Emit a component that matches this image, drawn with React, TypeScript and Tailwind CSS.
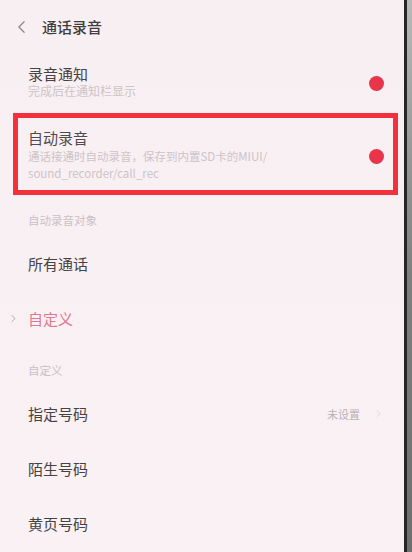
import React from 'react'

const font = { fontFamily: '"Noto Sans CJK SC", "Noto Sans", sans-serif' }

function Chevron({ className, dir = 'right' }: { className?: string; dir?: 'left' | 'right' }) {
  return (
    <svg viewBox="0 0 10 16" className={className} fill="none" stroke="currentColor" strokeWidth="1.4" strokeLinecap="round" strokeLinejoin="round">
      {dir === 'left' ? <path d="M8 2 L2 8 L8 14" /> : <path d="M2 2 L8 8 L2 14" />}
    </svg>
  )
}

function Dot() {
  return <div className="w-[15px] h-[15px] rounded-full bg-[#e8354b] flex-shrink-0" />
}

function Row({ label }: { label: string }) {
  return (
    <div className="h-[55px] px-[28px] flex items-center">
      <span className="text-[15px] leading-[20px] text-[#454243]">{label}</span>
    </div>
  )
}

function SectionHeader({ label }: { label: string }) {
  return (
    <div className="h-[41px] pt-[17px] px-[28px]">
      <p className="text-[11.5px] leading-[16px] text-[#c9c0c4]">{label}</p>
    </div>
  )
}

export default function App() {
  return (
    <div className="w-[412px] h-[552px] flex overflow-hidden" style={font}>
      <div className="flex-1 bg-gradient-to-b from-[#f8eff2] via-[#f9f0f4] to-[#f9f1f3]">
        {/* header */}
        <div className="h-[54px] flex items-center pl-[17px]">
          <Chevron dir="left" className="w-[9px] h-[14px] text-[#8c8689]" />
          <span className="ml-[16px] text-[15px] leading-[20px] font-medium text-[#3f3d3e]">通话录音</span>
        </div>

        {/* 录音通知 */}
        <div className="h-[59px] pl-[28px] pr-[20px] flex items-start justify-between">
          <div className="pt-[10px]">
            <p className="text-[15px] leading-[20px] text-[#454243]">录音通知</p>
            <p className="text-[12px] leading-[14px] text-[#cdc4c8]">完成后在通知栏显示</p>
          </div>
          <div className="pt-[22px]">
            <Dot />
          </div>
        </div>

        {/* 自动录音 (highlighted) */}
        <div className="h-[82px] ml-[13px] mr-[6px] border-[5px] border-[#f2313d] pl-[10px] pr-[9px] flex items-center justify-between">
          <div className="pt-[1px]">
            <p className="text-[15px] leading-[20px] text-[#504c4e]">自动录音</p>
            <p className="text-[11.5px] leading-[17px] text-[#cdc4c8]">通话接通时自动录音，保存到内置SD卡的MIUI/</p>
            <p className="text-[11.5px] leading-[17px] text-[#cdc4c8]">sound_recorder/call_rec</p>
          </div>
          <div className="pt-[4px]">
            <Dot />
          </div>
        </div>

        <SectionHeader label="自动录音对象" />
        <Row label="所有通话" />
        <div className="h-[55px] pl-[11px] flex items-center">
          <Chevron className="w-[5px] h-[9px] text-[#8e878a]" />
          <span className="ml-[12px] text-[15px] leading-[20px] text-[#e2788c]">自定义</span>
        </div>

        <div className="h-[40px] pt-[16px] px-[28px]">
          <p className="text-[11.5px] leading-[16px] text-[#c9c0c4]">自定义</p>
        </div>
        <div className="h-[55px] pl-[28px] pr-[23px] flex items-center justify-between">
          <span className="text-[15px] leading-[20px] text-[#454243]">指定号码</span>
          <div className="flex items-center">
            <span className="text-[11px] leading-[16px] text-[#b9b1b5]">未设置</span>
            <Chevron className="ml-[16px] w-[5px] h-[9px] text-[#d6cfd2]" />
          </div>
        </div>
        <Row label="陌生号码" />
        <Row label="黄页号码" />
      </div>
      <div className="w-[3px] bg-[#262626]" />
      <div className="w-[5px] bg-gradient-to-b from-[#b9b9b9] via-[#7f7f7f] to-[#6e6e6e]" />
    </div>
  )
}
